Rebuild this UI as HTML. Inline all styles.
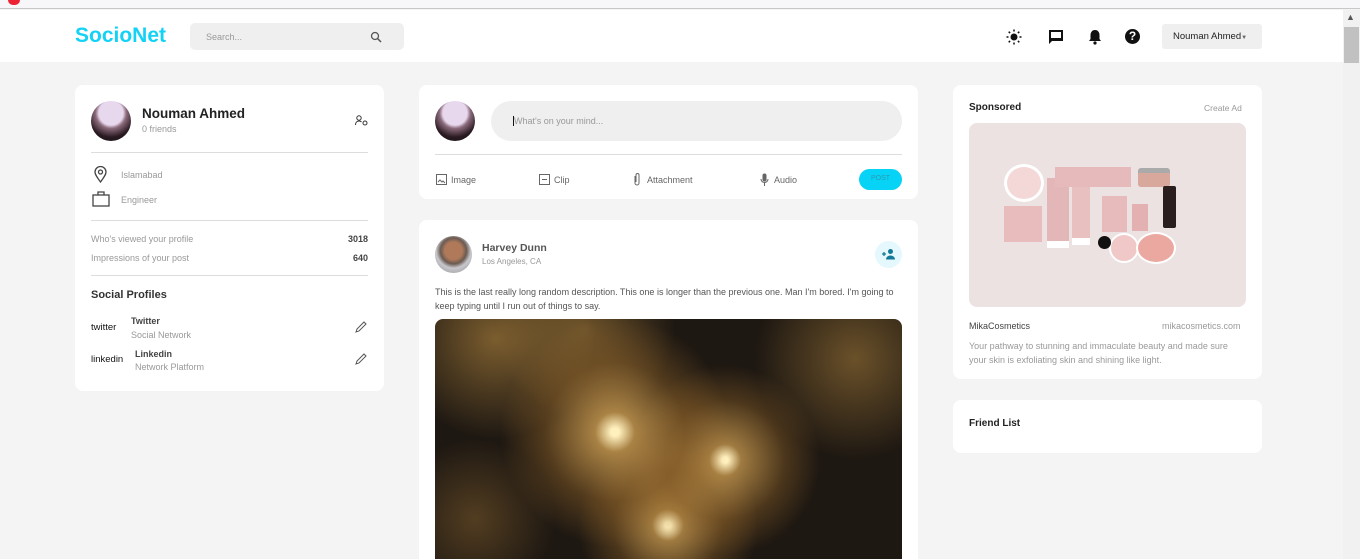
<!DOCTYPE html>
<html><head><meta charset="utf-8"><style>
*{box-sizing:border-box;margin:0;padding:0}
html,body{width:1360px;height:559px;overflow:hidden}
body{background:#f4f4f4;font-family:"Liberation Sans",sans-serif;position:relative;color:#333}
.a{position:absolute}
.card{position:absolute;background:#fff;border-radius:8px}
.g{color:#999}
.hr{position:absolute;height:1px;background:#ddd}
</style></head><body>
<div class="a" style="left:0;top:0;width:1360px;height:9px;background:#f7f7f9;border-bottom:1px solid #c8c8c8"></div>
<div class="a" style="left:8px;top:0;width:12px;height:5px;background:#e23;border-radius:0 0 6px 6px"></div>
<div class="a" style="left:0;top:10px;width:1343px;height:52px;background:#fff"></div>
<div class="a" style="left:1343px;top:10px;width:17px;height:549px;background:#f1f1f1"></div>
<div class="a" style="left:1344px;top:27px;width:15px;height:36px;background:#c1c1c1"></div>
<div class="a" style="left:1346px;top:12px;font-size:9px;color:#555">▲</div>
<div class="a" style="left:75px;top:24px;font-size:21px;font-weight:bold;color:#14d2f5">SocioNet</div>
<div class="a" style="left:190px;top:23px;width:214px;height:27px;background:#efefef;border-radius:5px"></div>
<div class="a g" style="left:206px;top:32px;font-size:9px">Search...</div>
<svg class="a" style="left:370px;top:31px" width="12" height="12" viewBox="0 0 12 12"><circle cx="5" cy="5" r="3.5" fill="none" stroke="#555" stroke-width="1.3"/><path d="M7.5 7.5L11 11" stroke="#555" stroke-width="1.5"/></svg>
<svg class="a" style="left:1006px;top:29px" width="16" height="16" viewBox="0 0 16 16"><circle cx="8" cy="8" r="3.5" fill="#111"/><g stroke="#111" stroke-width="1.5"><path d="M8 0.5v2M8 13.5v2M0.5 8h2M13.5 8h2M2.7 2.7l1.4 1.4M11.9 11.9l1.4 1.4M2.7 13.3l1.4-1.4M11.9 4.1l1.4-1.4"/></g></svg>
<svg class="a" style="left:1048px;top:29px" width="16" height="16" viewBox="0 0 16 16"><path d="M1 1h14v11H4l-3 3z" fill="#111"/><rect x="3" y="3" width="10" height="6" fill="#fff"/></svg>
<svg class="a" style="left:1088px;top:29px" width="14" height="16" viewBox="0 0 14 16"><path d="M7 1c3 0 4.5 2.5 4.5 5v4l1.5 2H1l1.5-2V6C2.5 3.5 4 1 7 1z" fill="#111"/><circle cx="7" cy="14" r="1.6" fill="#111"/></svg>
<div class="a" style="left:1125px;top:29px;width:15px;height:15px;border-radius:50%;background:#111;color:#fff;font-size:12px;font-weight:bold;text-align:center;line-height:15px">?</div>
<div class="a" style="left:1162px;top:24px;width:100px;height:25px;background:#efefef;border-radius:3px;font-size:9.5px;line-height:25px;padding-left:11px;color:#222">Nouman Ahmed<span style="font-size:6px;color:#666">▼</span></div>

<!-- left card -->
<div class="card" style="left:75px;top:85px;width:309px;height:306px"></div>
<div class="a" style="left:91px;top:101px;width:40px;height:40px;border-radius:50%;background:radial-gradient(circle at 50% 30%,#e8d8ee 0 35%,#8a6a7a 45%,#2a1a22 70%,#111 100%)"></div>
<div class="a" style="left:142px;top:106px;font-size:13.5px;font-weight:bold;color:#222">Nouman Ahmed</div>
<div class="a g" style="left:142px;top:124px;font-size:9px">0 friends</div>
<svg class="a" style="left:355px;top:115px" width="13" height="11" viewBox="0 0 13 11"><circle cx="4" cy="3" r="2.2" fill="none" stroke="#333"/><path d="M0.5 10c0-3 2-4 3.5-4s2 .5 2.5 1" fill="none" stroke="#333"/><circle cx="10" cy="8" r="2" fill="none" stroke="#333"/></svg>
<div class="hr" style="left:91px;top:152px;width:277px"></div>
<svg class="a" style="left:94px;top:166px" width="13" height="17" viewBox="0 0 13 17"><path d="M6.5 16C2 10 1 8 1 6a5.5 5.5 0 0 1 11 0c0 2-1 4-5.5 10z" fill="none" stroke="#444" stroke-width="1.3"/><circle cx="6.5" cy="6" r="2" fill="none" stroke="#444" stroke-width="1.3"/></svg>
<div class="a g" style="left:121px;top:170px;font-size:9px">Islamabad</div>
<svg class="a" style="left:92px;top:191px" width="18" height="16" viewBox="0 0 18 16"><rect x="1" y="4" width="16" height="11" fill="none" stroke="#444" stroke-width="1.3"/><path d="M6 4V1h6v3" fill="none" stroke="#444" stroke-width="1.3"/></svg>
<div class="a g" style="left:121px;top:195px;font-size:9px">Engineer</div>
<div class="hr" style="left:91px;top:220px;width:277px"></div>
<div class="a g" style="left:91px;top:234px;font-size:9px">Who's viewed your profile</div>
<div class="a" style="left:330px;top:234px;width:38px;text-align:right;font-size:9px;font-weight:bold;color:#444">3018</div>
<div class="a g" style="left:91px;top:253px;font-size:9px">Impressions of your post</div>
<div class="a" style="left:330px;top:253px;width:38px;text-align:right;font-size:9px;font-weight:bold;color:#444">640</div>
<div class="hr" style="left:91px;top:275px;width:277px"></div>
<div class="a" style="left:91px;top:289px;font-size:11px;font-weight:bold;color:#333">Social Profiles</div>
<div class="a" style="left:91px;top:322px;font-size:9.5px;color:#111">twitter</div>
<div class="a" style="left:131px;top:316px;font-size:9px;font-weight:bold;color:#444">Twitter</div>
<div class="a g" style="left:131px;top:330px;font-size:9px">Social Network</div>
<div class="a" style="left:91px;top:354px;font-size:9.5px;color:#111">linkedin</div>
<div class="a" style="left:135px;top:349px;font-size:9px;font-weight:bold;color:#444">Linkedin</div>
<div class="a g" style="left:135px;top:362px;font-size:9px">Network Platform</div>
<svg class="a" style="left:355px;top:321px" width="12" height="12" viewBox="0 0 12 12"><path d="M1 11l1-3 7-7 2 2-7 7z" fill="none" stroke="#555"/></svg>
<svg class="a" style="left:355px;top:353px" width="12" height="12" viewBox="0 0 12 12"><path d="M1 11l1-3 7-7 2 2-7 7z" fill="none" stroke="#555"/></svg>

<!-- composer -->
<div class="card" style="left:419px;top:85px;width:499px;height:114px"></div>
<div class="a" style="left:435px;top:101px;width:40px;height:40px;border-radius:50%;background:radial-gradient(circle at 50% 30%,#e8d8ee 0 35%,#8a6a7a 45%,#2a1a22 70%,#111 100%)"></div>
<div class="a" style="left:491px;top:101px;width:411px;height:40px;background:#efefef;border-radius:20px"></div>
<div class="a" style="left:513px;top:116px;width:1px;height:10px;background:#111"></div>
<div class="a g" style="left:514px;top:116px;font-size:9px">What's on your mind...</div>
<div class="hr" style="left:435px;top:154px;width:467px"></div>
<svg class="a" style="left:436px;top:174px" width="11" height="11"><rect x="0.5" y="0.5" width="10" height="10" fill="none" stroke="#666"/><path d="M2 8l2-2 2 2 1-1 2 2" stroke="#666" fill="none"/></svg>
<div class="a" style="left:451px;top:175px;font-size:9px;color:#666">Image</div>
<svg class="a" style="left:539px;top:174px" width="11" height="11"><rect x="0.5" y="0.5" width="10" height="10" fill="none" stroke="#666"/><path d="M3 5.5h5" stroke="#666"/></svg>
<div class="a" style="left:554px;top:175px;font-size:9px;color:#666">Clip</div>
<svg class="a" style="left:633px;top:172px" width="8" height="14"><path d="M2 4v7a2 2 0 0 0 4 0V3a1.5 1.5 0 0 0-3 0v7" fill="none" stroke="#666"/></svg>
<div class="a" style="left:647px;top:175px;font-size:9px;color:#666">Attachment</div>
<svg class="a" style="left:760px;top:173px" width="9" height="13"><rect x="2.5" y="0.5" width="4" height="8" rx="2" fill="#666"/><path d="M1 6a3.5 3.5 0 0 0 7 0M4.5 10v3" stroke="#666" fill="none"/></svg>
<div class="a" style="left:774px;top:175px;font-size:9px;color:#666">Audio</div>
<div class="a" style="left:859px;top:169px;width:43px;height:21px;border-radius:11px;background:#06d3f5;color:#2a9ab5;font-size:7px;text-align:center;line-height:20px">POST</div>

<!-- post -->
<div class="card" style="left:419px;top:220px;width:499px;height:339px;border-radius:8px 8px 0 0"></div>
<div class="a" style="left:435px;top:236px;width:37px;height:37px;border-radius:50%;background:radial-gradient(circle at 50% 40%,#b07a5a 0 30%,#6a5a52 45%,#c8c8cc 60%,#8a8a90 100%)"></div>
<div class="a" style="left:482px;top:242px;font-size:10.5px;font-weight:bold;color:#555">Harvey Dunn</div>
<div class="a g" style="left:482px;top:257px;font-size:8px">Los Angeles, CA</div>
<div class="a" style="left:875px;top:241px;width:27px;height:27px;border-radius:50%;background:#e4f8fd"></div>
<svg class="a" style="left:881px;top:248px" width="15" height="12" viewBox="0 0 15 12"><path d="M1 6h4M3 4v4" stroke="#157a99" stroke-width="1.3"/><circle cx="9.5" cy="3.5" r="2.5" fill="#157a99"/><path d="M5 11.5c0-3 3-4 4.5-4s4.5 1 4.5 4z" fill="#157a99"/></svg>
<div class="a" style="left:435px;top:285px;width:470px;font-size:9px;line-height:14px;color:#555">This is the last really long random description. This one is longer than the previous one. Man I'm bored. I'm going to keep typing until I run out of things to say.</div>
<div class="a" style="left:435px;top:319px;width:467px;height:240px;border-radius:8px 8px 0 0;background-repeat:no-repeat;background:
radial-gradient(circle at 180px 113px,rgba(255,240,190,1) 0 4px,rgba(215,165,85,.75) 20px,rgba(160,110,45,.4) 70px,transparent 115px),
radial-gradient(circle at 290px 141px,rgba(255,240,190,1) 0 3px,rgba(215,165,85,.7) 16px,rgba(160,110,45,.35) 60px,transparent 95px),
radial-gradient(circle at 233px 206px,rgba(255,240,190,1) 0 3px,rgba(215,165,85,.7) 16px,rgba(160,110,45,.35) 55px,transparent 90px),
radial-gradient(circle at 60px 20px,rgba(200,150,70,.55),transparent 100px),
radial-gradient(circle at 150px 10px,rgba(200,150,70,.45),transparent 90px),
radial-gradient(circle at 420px 40px,rgba(200,150,70,.45),transparent 100px),
radial-gradient(circle at 40px 200px,rgba(180,130,60,.35),transparent 80px),
#1e1812"></div>

<!-- sponsored -->
<div class="card" style="left:953px;top:85px;width:309px;height:294px"></div>
<div class="a" style="left:969px;top:102px;font-size:10px;font-weight:bold;color:#222">Sponsored</div>
<div class="a g" style="left:1204px;top:103px;font-size:8.5px">Create Ad</div>
<div class="a" style="left:969px;top:123px;width:277px;height:184px;border-radius:8px;background:#ece2e2;overflow:hidden">
 <div class="a" style="left:35px;top:41px;width:40px;height:38px;border-radius:50%;background:#f4d8d8;border:3px solid #fff"></div>
 <div class="a" style="left:35px;top:83px;width:38px;height:36px;background:#e8bcbc"></div>
 <div class="a" style="left:78px;top:55px;width:22px;height:70px;background:#e3b7b8;border-bottom:7px solid #fff"></div>
 <div class="a" style="left:103px;top:64px;width:18px;height:58px;background:#e8c0c0;border-bottom:7px solid #fff"></div>
 <div class="a" style="left:86px;top:44px;width:76px;height:20px;background:#e6baba"></div>
 <div class="a" style="left:133px;top:73px;width:25px;height:36px;background:#e7bbbb"></div>
 <div class="a" style="left:169px;top:45px;width:32px;height:19px;border-radius:3px;background:#d8a89c;border-top:5px solid #aaa"></div>
 <div class="a" style="left:163px;top:81px;width:16px;height:27px;background:#e3b1b1"></div>
 <div class="a" style="left:194px;top:63px;width:13px;height:42px;background:#2a1e1e;border-radius:2px"></div>
 <div class="a" style="left:140px;top:110px;width:30px;height:30px;border-radius:50%;background:#f0c8c8;border:2px solid #fff"></div>
 <div class="a" style="left:167px;top:109px;width:40px;height:32px;border-radius:50%;background:#eba8a0;border:2px solid #fff"></div>
 <div class="a" style="left:129px;top:113px;width:13px;height:13px;border-radius:50%;background:#111"></div>
</div>
<div class="a" style="left:969px;top:321px;font-size:9px;color:#444">MikaCosmetics</div>
<div class="a g" style="left:1162px;top:321px;font-size:9px">mikacosmetics.com</div>
<div class="a g" style="left:969px;top:339px;width:270px;font-size:9px;line-height:14px">Your pathway to stunning and immaculate beauty and made sure your skin is exfoliating skin and shining like light.</div>

<div class="card" style="left:953px;top:400px;width:309px;height:53px"></div>
<div class="a" style="left:969px;top:418px;font-size:10px;font-weight:bold;color:#222">Friend List</div>
</body></html>
